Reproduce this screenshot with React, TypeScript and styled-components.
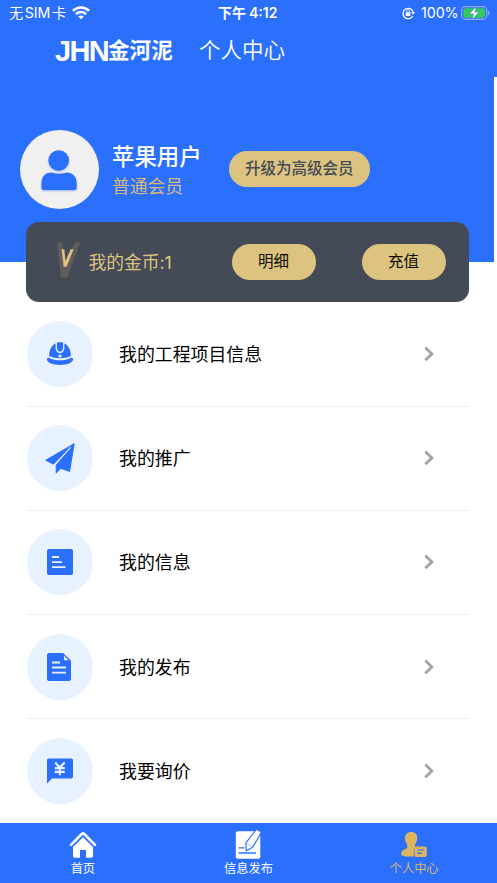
import React from "react";
import styled, { createGlobalStyle } from "styled-components";

const BLUE = "#2b70fd";
const GOLD = "#dcc380";
const SLATE = "#444b57";

const GlobalStyle = createGlobalStyle`
  * { box-sizing: border-box; }
  body { margin: 0; background: #fff; overflow: hidden; }
  button { border: 0; padding: 0; margin: 0; font-family: inherit; }
  svg { display: block; flex: none; }
`;

const Screen = styled.div`
  width: 497px;
  height: 883px;
  display: flex;
  flex-direction: column;
  overflow: hidden;
  background: #fff;
  font-family: Inter, "Noto Sans CJK SC", sans-serif;
`;

const Top = styled.header`
  height: 77px;
  flex: none;
  background: ${BLUE};
  color: #fff;
`;

const StatusBar = styled.div`
  height: 26px;
  padding: 0 7px 0 9px;
  display: grid;
  grid-template-columns: 209px 1fr auto;
  align-items: center;
  line-height: 26px;
  font-size: 14.2px;
`;

const StatusGroup = styled.div`
  display: flex;
  align-items: center;
  white-space: nowrap;
`;

const Carrier = styled.span`
  margin-right: 6px;
  width: 57px;
  letter-spacing: -0.1px;
  word-spacing: -2.2px;
`;

const Clock = styled.div`
  font-size: 14px;
  font-weight: 600;
  word-spacing: -0.5px;
  white-space: nowrap;
`;

const Percent = styled.span`
  margin: 0 3px 0 6px;
  width: 37px;
  font-size: 14.3px;
  letter-spacing: -0.1px;
`;

const TitleBar = styled.div`
  height: 50px;
  padding-left: 55px;
  display: flex;
  align-items: center;
  white-space: nowrap;
`;

const Latin = styled.span`
  width: 53px;
  font: 700 29px/50px "Liberation Sans", sans-serif;
  letter-spacing: -1.7px;
`;

const Brand = styled.span`
  width: 91px;
  height: 50px;
  font-size: 21.6px;
  font-weight: 700;
  line-height: 48px;
`;

const PageTitle = styled.h1`
  margin: 0;
  height: 50px;
  font-family: "Noto Sans CJK SC", sans-serif;
  font-size: 21.5px;
  font-weight: 350;
  line-height: 46px;
`;

const Hero = styled.section`
  width: 494.4px;
  height: 184.6px;
  flex: none;
  padding: 53px 0 0 19.5px;
  display: flex;
  align-items: flex-start;
  background: ${BLUE};
`;

const Avatar = styled.div`
  width: 79px;
  height: 79px;
  border-radius: 50%;
  background: #f0f0f0;
  display: grid;
  place-items: center;
`;

const Identity = styled.div`
  width: 117px;
  margin: 11px 0 0 13.5px;
  white-space: nowrap;
`;

const UserName = styled.div`
  color: #fff;
  font-size: 22.4px;
  font-weight: 500;
  line-height: 31px;
`;

const Level = styled.div`
  color: #d7b878;
  font-size: 17.8px;
  line-height: 29px;
`;

const Pill = styled.button<{ $width: number; $color: string; $bold?: boolean }>`
  width: ${(p) => p.$width}px;
  height: 36px;
  border-radius: 18px;
  background: ${GOLD};
  color: ${(p) => p.$color};
  font-size: 15.5px;
  font-weight: ${(p) => (p.$bold ? 500 : 400)};
  line-height: 36px;
  white-space: nowrap;
`;

const HeroAction = styled.div`
  margin-top: 21.3px;
`;

const Wallet = styled.section`
  width: 442.5px;
  height: 80px;
  flex: none;
  margin: -39.4px 0 0 26px;
  padding: 0 23px 0 29px;
  border-radius: 13px;
  background: ${SLATE};
  position: relative;
  display: flex;
  align-items: center;
`;

const VBadge = styled.span`
  width: 26px;
  margin-bottom: 5px;
`;

const Coins = styled.span`
  width: 143px;
  margin-left: 7.5px;
  padding-bottom: 2px;
  color: ${GOLD};
  font-size: 17.8px;
  letter-spacing: -0.05px;
  white-space: nowrap;
`;

const WalletActions = styled.div`
  display: flex;
  gap: 46px;
`;

const Menu = styled.main`
  flex: 1;
  min-height: 0;
  overflow: hidden;
  margin: 0 28px 0 26.5px;
`;

const MenuRow = styled.div`
  height: 104.3px;
  padding-right: 34px;
  display: flex;
  align-items: center;
  border-bottom: 1.4px solid #eeeeee;
  &:last-child { border-bottom-color: transparent; }
`;

const IconDisc = styled.div`
  width: 66px;
  height: 66px;
  flex: none;
  border-radius: 50%;
  background: #e7f1ff;
  display: grid;
  place-items: center;
`;

const MenuLabel = styled.span`
  flex: 1;
  margin-left: 26.5px;
  padding-bottom: 2px;
  color: #000;
  font-size: 17.9px;
`;

const TabBar = styled.nav`
  height: 60px;
  flex: none;
  display: grid;
  grid-template-columns: repeat(3, 1fr);
  background: ${BLUE};
`;

const Tab = styled.div<{ $active?: boolean }>`
  padding-top: 6px;
  display: flex;
  flex-direction: column;
  align-items: center;
  color: ${(p) => (p.$active ? "#d9b564" : "#fff")};
`;

const TabLabel = styled.span`
  height: 18px;
  font-size: 12.2px;
  line-height: 20px;
`;

const PersonSvg = styled.svg`
  filter: drop-shadow(0 1px 1px rgba(43, 112, 253, 0.45));
`;

const Wifi = () => (
  <svg width="18" height="14" viewBox="0 0 18 14" fill="none" stroke="#fff" strokeWidth="2.5">
    <path d="M1 4.8C5.5.3 12.5.3 17 4.8" />
    <path d="M4 8.1c2.8-2.8 7.2-2.8 10 0" />
    <path d="M9 13.3 6.2 10.5c1.5-1.5 4.1-1.5 5.6 0Z" fill="#fff" stroke="none" />
  </svg>
);

const RotationLock = () => (
  <svg width="13" height="13" viewBox="0 0 13 13" fill="none" stroke="#fff">
    <path d="M10.8 9A5.2 5.2 0 1 1 11.2 5" strokeWidth="1.2" />
    <path d="M9.2 4.9H13L11.2 7.7Z" fill="#fff" stroke="none" />
    <rect x="3.7" y="5.2" width="4.8" height="3.7" rx=".6" fill="#fff" stroke="none" />
    <path d="M4.7 5.5V4.3a1.4 1.4 0 0 1 2.8 0v1.2" strokeWidth=".9" />
  </svg>
);

const Battery = () => (
  <svg width="29" height="14" viewBox="0 0 29 14">
    <rect x=".6" y=".6" width="25.2" height="12.8" rx="4" fill="none" stroke="#fff" strokeOpacity=".45" strokeWidth="1.1" />
    <path d="M27.2 4.7c1.9.6 1.9 4 0 4.6Z" fill="#fff" fillOpacity=".5" />
    <rect x="2.3" y="2.2" width="21.8" height="9.6" rx="2.5" fill="#34cb5b" />
    <path d="M15.5.3 8.3 7.9h4.2L10.9 13.7l7.2-7.6h-4.3Z" fill="#fff" stroke={BLUE} strokeWidth=".5" />
  </svg>
);

const Person = () => (
  <PersonSvg width="40" height="46" viewBox="0 0 40 46" fill={BLUE}>
    <circle cx="19.7" cy="13.5" r="10.3" />
    <path d="M12.5 25.4c5 1.8 10 1.8 15 0 6.4 0 10.2 4.2 10.2 11v4.2c0 1.6-.8 2.4-2.4 2.4H4.9c-1.6 0-2.4-.8-2.4-2.4v-4.2c0-6.8 3.6-11 10-11Z" />
  </PersonSvg>
);

const VMark = () => (
  <svg width="26" height="36" viewBox="0 0 26 36">
    <path d="M2 .5h5.2l1 21L20.5.5H25L12.2 35.5H6Z" fill="#5f5c5b" />
    <path d="M6.5 7.2h2.8l1.2 12L15.6 7.2h3L11.6 24.7H8.7Z" fill={GOLD} />
  </svg>
);

const Helmet = () => (
  <svg width="28" height="26" viewBox="0 0 28 26" fill={BLUE}>
    <path d="M3.1 15C3 8.5 6.4 3.4 9.6 2.4v4.2c0 3.4 1.8 5.7 4.4 5.7s4.4-2.3 4.4-5.7V2.4C21.6 3.4 25 8.5 24.9 15 18 18 10 18 3.1 15Z" />
    <path d="M10.9 1.8c2-.6 4.2-.6 6.2 0v4.5c0 2.7-1.1 4.4-3.1 4.4s-3.1-1.7-3.1-4.4Z" />
    <path d="M3 17c7 3.1 15 3.1 22 0 1.4-.6 2.2.2 2 1.5C26.6 25.7 1.4 25.7 1 18.5.8 17.2 1.6 16.4 3 17Z" />
    <circle cx="14" cy="15" r="1.6" fill="#e7f1ff" />
  </svg>
);

const Plane = () => (
  <svg width="32" height="32" viewBox="0 0 32 32" fill={BLUE} stroke={BLUE} strokeWidth="1.2" strokeLinejoin="round">
    <path d="M30 2 2 18.3l7.4 3.6L29.5 2.3Z" />
    <path d="M30 2 12.3 23.4v7.3l4.3-4.5 8.9 3.1Z" />
    <path d="M26.6 5.3 10.9 22.5" stroke="#e7f1ff" strokeWidth="1.1" />
  </svg>
);

const Note = () => (
  <svg width="26" height="26" viewBox="0 0 26 26">
    <rect width="26" height="26" rx="2" fill={BLUE} />
    <path d="M5 8h7M5 13.2h10M5 18.2h13.5" stroke="#e7f1ff" strokeWidth="1.8" />
  </svg>
);

const Doc = () => (
  <svg width="26" height="28" viewBox="0 0 26 28">
    <path d="M2.2 0h14l7.8 7.8v18c0 1.4-.8 2.2-2.2 2.2H2.2C.8 28 0 27.2 0 25.8V2.2C0 .8.8 0 2.2 0Z" fill={BLUE} />
    <path d="M17 2.8v4.4h4.4Z" fill="#e7f1ff" />
    <path d="M5 9.5h8M5 14.5h14M5 19.7h14" stroke="#e7f1ff" strokeWidth="1.8" />
  </svg>
);

const Quote = () => (
  <svg width="26" height="26" viewBox="0 0 26 26">
    <path d="M2 .5h22c1.3 0 2 .7 2 2v16c0 1.3-.7 2-2 2H5L0 25.5v-23C0 1.2.7.5 2 .5Z" fill={BLUE} />
    <path d="m8.2 4.6 4.6 5 4.9-5M12.8 9.6v7.7M7.8 10.2h10M7.8 13.8h10" fill="none" stroke="#e7f1ff" strokeWidth="2.2" />
  </svg>
);

const Chevron = () => (
  <svg width="12" height="16" viewBox="0 0 12 16" fill="none" stroke="#a3a3a3" strokeWidth="2.8">
    <path d="m2.3 1.5 6.6 6.4-6.6 6.4" />
  </svg>
);

const Home = () => (
  <svg width="28" height="30" viewBox="0 0 28 30" fill="#fff">
    <path d="M2 15.8 12.8 5q1.2-1.1 2.4 0L26 15.8" fill="none" stroke="#fff" strokeWidth="2.6" strokeLinecap="round" strokeLinejoin="round" />
    <path d="M14 8.2 24 18v8.4c0 1.4-.8 2.3-2.3 2.3H17V21h-6v7.7H6.3c-1.5 0-2.3-.9-2.3-2.3V18Z" />
  </svg>
);

const Compose = () => (
  <svg width="28" height="30" viewBox="0 0 28 30">
    <path d="M4 2.3h16.5L26.3 7v20.6c0 1.4-.8 2.2-2.2 2.2H4c-1.4 0-2.2-.8-2.2-2.2V4.5C1.8 3.1 2.6 2.3 4 2.3Z" fill="#fff" />
    <path d="M4.6 18.8h6M4.6 24h17.5" stroke={BLUE} strokeWidth="1.3" />
    <path d="M21.8.8c1-.9 5.6 1.6 5.3 3L18.6 18.4l-6.3 3.4-.4-7.8Z" fill="#fff" stroke={BLUE} strokeWidth="1.2" />
    <path d="m13.2 14.8 3.6 2.4" stroke={BLUE} strokeWidth=".6" />
  </svg>
);

const Profile = () => (
  <svg width="28" height="30" viewBox="0 0 28 30" fill="#dbb65f">
    <path d="M11.2 2.9c4 0 6.4 2.6 6.1 6.4-.2 3.4-2 5-2.4 7.5-.1 1 .4 1.3 1.5 1.7-1.8.5-2.6 1.8-2.6 3.5v5.6H6.5c-3 0-5.5-1.3-5.5-3.3 0-3.5 5.4-3.7 6.3-5.8C8.2 16 5 13.2 5 9.2c0-3.7 2.4-6.3 6.2-6.3Z" />
    <rect x="14.4" y="17.4" width="12.4" height="10.6" rx="2" />
    <path d="M17.3 21h6.8M17.3 24.2h4.6" stroke={BLUE} strokeWidth="1.2" />
  </svg>
);

const menuItems = [
  { label: "我的工程项目信息", Icon: Helmet },
  { label: "我的推广", Icon: Plane },
  { label: "我的信息", Icon: Note },
  { label: "我的发布", Icon: Doc },
  { label: "我要询价", Icon: Quote },
];

const tabs = [
  { label: "首页", Icon: Home },
  { label: "信息发布", Icon: Compose },
  { label: "个人中心", Icon: Profile, active: true },
];

export default function App() {
  return (
    <>
      <GlobalStyle />
      <Screen>
        <Top>
          <StatusBar>
            <StatusGroup>
              <Carrier>无 SIM 卡</Carrier>
              <Wifi />
            </StatusGroup>
            <Clock>下午 4:12</Clock>
            <StatusGroup>
              <RotationLock />
              <Percent>100%</Percent>
              <Battery />
            </StatusGroup>
          </StatusBar>
          <TitleBar>
            <Latin>JHN</Latin>
            <Brand>金河泥</Brand>
            <PageTitle>个人中心</PageTitle>
          </TitleBar>
        </Top>
        <Hero>
          <Avatar><Person /></Avatar>
          <Identity>
            <UserName>苹果用户</UserName>
            <Level>普通会员</Level>
          </Identity>
          <HeroAction>
            <Pill $width={140.5} $color={SLATE} $bold>升级为高级会员</Pill>
          </HeroAction>
        </Hero>
        <Wallet>
          <VBadge><VMark /></VBadge>
          <Coins>我的金币:1</Coins>
          <WalletActions>
            <Pill $width={84} $color="#0b0a05">明细</Pill>
            <Pill $width={84} $color="#0b0a05">充值</Pill>
          </WalletActions>
        </Wallet>
        <Menu>
          {menuItems.map(({ label, Icon }) => (
            <MenuRow key={label}>
              <IconDisc><Icon /></IconDisc>
              <MenuLabel>{label}</MenuLabel>
              <Chevron />
            </MenuRow>
          ))}
        </Menu>
        <TabBar>
          {tabs.map(({ label, Icon, active }) => (
            <Tab key={label} $active={active}>
              <Icon />
              <TabLabel>{label}</TabLabel>
            </Tab>
          ))}
        </TabBar>
      </Screen>
    </>
  );
}
